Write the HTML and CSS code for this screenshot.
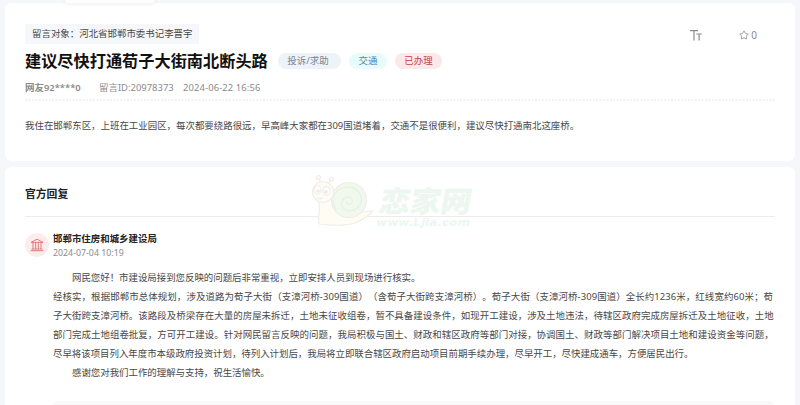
FILE: index.html
```html
<!DOCTYPE html>
<html lang="zh-CN">
<head>
<meta charset="utf-8">
<title>建议尽快打通荀子大街南北断头路</title>
<link rel="stylesheet" href="styles.css">
</head>
<body>
<div class="tab"></div>
<main class="page">
  <section class="card question">
    <div class="top">
      <div class="target">留言对象：河北省邯郸市委书记李晋宇</div>
      <div class="tools">
        <svg class="font-icon" viewBox="0 0 12 12" width="12" height="12"><path d="M0 1.6H8M4 1.6V11.5M6.4 5H11.8M9.1 5V11.5" fill="none" stroke="#8c8c8c" stroke-width="1.2"/></svg>
        <div class="fav">
          <svg viewBox="0 0 10 10" width="10" height="10"><path d="M5 .9 6.4 3.4 9.2 4 7.3 6.1 7.6 9 5 7.9 2.4 9 2.7 6.1.8 4 3.6 3.4Z" fill="none" stroke="#999" stroke-width=".9" stroke-linejoin="round"/></svg>
          <span>0</span>
        </div>
      </div>
    </div>
    <div class="title-row">
      <h1>建议尽快打通荀子大街南北断头路</h1>
      <span class="tag type">投诉/求助</span>
      <span class="tag field">交通</span>
      <span class="tag state">已办理</span>
    </div>
    <div class="meta">
      <b>网友92****0</b><span class="id">留言ID:20978373</span><span class="date">2024-06-22 16:56</span>
    </div>
    <svg class="dots" width="750" height="2"><path d="M0 1H750" stroke="#eeeeee" stroke-width="1.4" stroke-dasharray="2 1.4"/></svg>
    <p class="content">我住在邯郸东区，上班在工业园区，每次都要绕路很远，早高峰大家都在309国道堵着，交通不是很便利，建议尽快打通南北这座桥。</p>
  </section>
  <section class="card answer">
    <h2>官方回复</h2>
    <div class="reply">
      <div class="avatar">
        <svg viewBox="0 0 14 14" width="14" height="14"><path d="M1 4.4 7 1.2 13 4.4ZM.7 12.7H13.3M1.5 11.1H12.5M3 4.8V11M5.7 4.8V11M8.3 4.8V11M11 4.8V11" fill="none" stroke="#d9706c" stroke-width=".9"/></svg>
      </div>
      <div class="body">
        <h3>邯郸市住房和城乡建设局</h3>
        <div class="time">2024-07-04 10:19</div>
        <div class="text">
          <p class="indent">网民您好！市建设局接到您反映的问题后非常重视，立即安排人员到现场进行核实。</p>
          <p class="mixed">经核实，根据邯郸市总体规划，涉及道路为荀子大街（支漳河桥-309国道）（含荀子大街跨支漳河桥）。荀子大街（支漳河桥-309国道）全长约1236米，红线宽约60米；荀</p>
          <p>子大街跨支漳河桥。该路段及桥梁存在大量的房屋未拆迁，土地未征收组卷，暂不具备建设条件，如现开工建设，涉及土地违法，待辖区政府完成房屋拆迁及土地征收，土地</p>
          <p>部门完成土地组卷批复，方可开工建设。针对网民留言反映的问题，我局积极与国土、财政和辖区政府等部门对接，协调国土、财政等部门解决项目土地和建设资金等问题，</p>
          <p class="last">尽早将该项目列入年度市本级政府投资计划，待列入计划后，我局将立即联合辖区政府启动项目前期手续办理，尽早开工，尽快建成通车，方便居民出行。</p>
          <p class="indent">感谢您对我们工作的理解与支持，祝生活愉快。</p>
        </div>
        <div class="rating"></div>
      </div>
    </div>
  </section>
</main>
<svg class="watermark" width="170" height="60" viewBox="0 0 170 60">
  <g fill="#fffcf3" stroke="#f0ede8" stroke-width="1.1" stroke-linejoin="round">
    <path d="M12 9 9.5 4M20 9 22 5" fill="none"/>
    <circle cx="9.5" cy="3.5" r="2"/><circle cx="22.5" cy="5" r="2"/>
    <path d="M9 27C13 35 8 42 10 50Q34 53 46 49Q56 45 64 37L43 39Q28 40 22 24Z"/>
    <circle cx="40" cy="26" r="17.5" fill="#f1f9ef"/>
    <path d="M27 36C18 22 31 9 44 14C60 22 50 41 37 36C27 31 35 20 42 24C47 28 39 33 37 28" fill="none" stroke="#e8f1e4" stroke-width="1.5"/>
    <circle cx="14" cy="18" r="10.5"/>
    <ellipse cx="8.5" cy="16" rx="3.4" ry="4.2" fill="#fff"/><ellipse cx="17.5" cy="17" rx="3.6" ry="4.4" fill="#fff"/>
    <circle cx="9" cy="17" r="1.3" fill="#e9e9e9"/><circle cx="17" cy="18" r="1.4" fill="#e9e9e9"/>
    <path d="M8 24Q11 26 14 23.5" fill="none"/>
  </g>
  <text class="wm-name" transform="translate(69 38) skewX(-10)" textLength="92" lengthAdjust="spacingAndGlyphs">恋家网</text>
  <text class="wm-url" x="67" y="52" textLength="94" lengthAdjust="spacingAndGlyphs">www.Ljia.com</text>
</svg>
</body>
</html>
```

FILE: styles.css
```css
* { box-sizing: border-box; margin: 0; padding: 0; }
html { overflow: hidden; height: 405px; }
body {
  position: relative;
  width: 800px;
  height: 405px;
  overflow: hidden;
  background: #f6f7fa;
  color: #484848;
  font: 9.45px/19px "Noto Sans", "Noto Sans CJK SC", sans-serif;
  text-spacing-trim: space-all;
  white-space: nowrap;
}
svg { display: block; }
.tab {
  position: absolute;
  left: 65px;
  top: -7px;
  width: 90px;
  height: 10px;
  border-radius: 3px;
  background: #fff;
  box-shadow: 0 1px 4px rgba(0, 0, 0, .07);
  z-index: 1;
}
.page { display: flex; flex-direction: column; gap: 6px; height: 405px; overflow: hidden; padding: 3px 5px 0; }
.card { flex: none; border-radius: 6px; background: #fff; padding: 0 20px; }
.question { height: 158px; padding-top: 21px; }
.top { display: flex; justify-content: space-between; height: 20px; }
.target { width: 174px; padding-left: 7px; line-height: 20px; background: #f6f7fa; color: #484848; }
.tools { display: flex; align-items: center; padding: 2px 18px 0 0; color: #8c8c8c; }
.font-icon { margin-right: 37px; }
.fav { display: flex; align-items: center; gap: 2px; font-size: 10px; }
.title-row { display: flex; align-items: center; height: 34px; }
h1 { width: 243px; margin-right: 10px; font-size: 16.2px; line-height: 34px; font-weight: 700; color: #111; }
.tag { height: 16px; border-radius: 8px; line-height: 16px; text-align: center; margin-right: 8px; }
.type { width: 63px; padding-right: 3px; background: #eef2f9; color: #78838f; }
.field { width: 38px; background: #e9fbfb; color: #4a86c6; }
.state { width: 47px; background: #fbe8e9; color: #c9404e; }
.meta { display: flex; height: 21px; line-height: 20px; color: #8c8c8c; }
.meta b { width: 74px; font-weight: 600; }
.id { width: 84px; }
.date { letter-spacing: .1px; }
.content { margin-top: 15px; }
.answer { height: 238px; padding-top: 14px; border-radius: 6px 6px 0 0; overflow: hidden; }
h2 { height: 36px; border-bottom: 1px solid #ececee; font-size: 10.8px; line-height: 26px; color: #222; }
.reply { display: flex; gap: 4px; padding-top: 13px; }
.avatar { display: grid; place-items: center; width: 24px; height: 24px; margin-top: 3px; border-radius: 50%; background: #fdecec; }
.body { width: 722px; }
h3 { font-size: 9.45px; line-height: 17px; color: #222; }
.time { font-size: 8.8px; line-height: 12px; color: #8c8c8c; }
.text { margin-top: 9px; letter-spacing: .045px; }
.mixed { letter-spacing: .09px; }
.last { letter-spacing: -.02px; }
.indent { padding-left: 19px; letter-spacing: -.02px; }
.rating { height: 20px; margin-top: 19px; border-radius: 5px 5px 0 0; background: #f9f9fa; }
.watermark { position: absolute; left: 309px; top: 174px; }
.wm-name { font: 900 29px "Noto Sans CJK SC", sans-serif; fill: #ebf7ef; }
.wm-url { font: italic bold 10.5px "DejaVu Sans", sans-serif; fill: #ebf7ef; }
```
